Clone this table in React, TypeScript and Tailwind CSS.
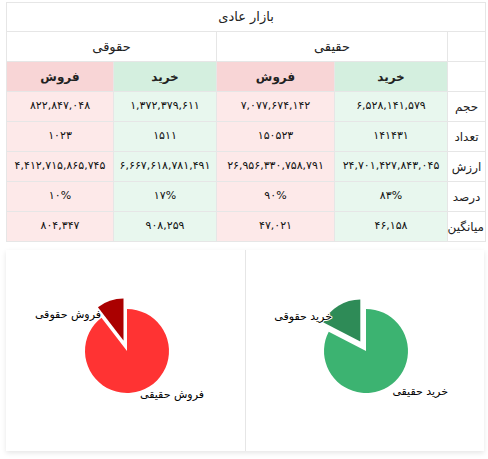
type Row = {
    label: string;
    values: [string, string, string, string];
};

const rows: Row[] = [
    { label: 'حجم', values: ['۶,۵۲۸,۱۴۱,۵۷۹', '۷,۰۷۷,۶۷۴,۱۴۲', '۱,۳۷۲,۳۷۹,۶۱۱', '۸۲۲,۸۴۷,۰۴۸'] },
    { label: 'تعداد', values: ['۱۴۱۴۳۱', '۱۵۰۵۲۳', '۱۵۱۱', '۱۰۲۳'] },
    { label: 'ارزش', values: ['۲۴,۷۰۱,۴۲۷,۸۴۳,۰۴۵', '۲۶,۹۵۶,۳۳۰,۷۵۸,۷۹۱', '۶,۶۶۷,۶۱۸,۷۸۱,۴۹۱', '۴,۴۱۲,۷۱۵,۸۶۵,۷۴۵'] },
    { label: 'درصد', values: ['۸۳%', '۹۰%', '۱۷%', '۱۰%'] },
    { label: 'میانگین', values: ['۴۶,۱۵۸', '۴۷,۰۲۱', '۹۰۸,۲۵۹', '۸۰۴,۳۴۷'] },
];

const cellBg = ['bg-[#e8f7ee]', 'bg-[#fde9e9]', 'bg-[#e8f7ee]', 'bg-[#fde9e9]'];

type PieProps = {
    part: number;
    main: string;
    dark: string;
    mainLabel: string;
    partLabel: string;
    partLabelPos: [number, number];
    mainLabelPos: [number, number];
};

function Pie({ part, main, dark, mainLabel, partLabel, partLabelPos, mainLabelPos }: PieProps) {
    const cx = 120;
    const cy = 101;
    const r = 42;
    const d = 11;
    const theta = part * 2 * Math.PI;
    const pt = (a: number, ox = 0, oy = 0) => [cx + ox + r * Math.sin(a), cy + oy - r * Math.cos(a)];

    // slice grande
    const [ex, ey] = pt(2 * Math.PI - theta);
    const mainPath = `M${cx},${cy} L${cx},${cy - r} A${r},${r} 0 1 1 ${ex},${ey} Z`;

    // slice separada
    const mid = 2 * Math.PI - theta / 2;
    const ox = d * Math.sin(mid);
    const oy = -d * Math.cos(mid);
    const [sx, sy] = pt(2 * Math.PI - theta, ox, oy);
    const [tx, ty] = pt(0, ox, oy);
    const partPath = `M${cx + ox},${cy + oy} L${sx},${sy} A${r},${r} 0 0 1 ${tx},${ty} Z`;

    const labelProps = {
        direction: 'rtl' as const,
        textAnchor: 'start' as const,
        fontSize: 11,
        fill: '#000',
        stroke: '#fff',
        strokeWidth: 2,
        paintOrder: 'stroke',
        strokeLinejoin: 'round' as const,
    };

    return (
        <svg width="238" height="201" className="block">
            <path d={mainPath} fill={main} />
            <path d={partPath} fill={dark} />
            <text x={partLabelPos[0]} y={partLabelPos[1]} {...labelProps}>
                {partLabel}
            </text>
            <text x={mainLabelPos[0]} y={mainLabelPos[1]} {...labelProps}>
                {mainLabel}
            </text>
        </svg>
    );
}

export default function App() {
    return (
        <div className="min-h-[459px] bg-white font-['DejaVu_Sans',sans-serif] text-[#222]">
            <div className="pt-[2px] pl-[6px]">
                <table dir="rtl" className="w-[479px] table-fixed border-collapse border border-[#e6e6e6] text-center text-[12px]">
                    <colgroup>
                        <col className="w-[38px]" />
                        <col className="w-[113px]" />
                        <col className="w-[118px]" />
                        <col className="w-[103px]" />
                        <col className="w-[107px]" />
                    </colgroup>
                    <thead>
                        <tr className="h-[29px]">
                            <th colSpan={5} className="border-b border-[#e6e6e6] text-[13px] font-normal">
                                بازار عادی
                            </th>
                        </tr>
                        <tr className="h-[30px]">
                            <th className="border border-[#e6e6e6]"></th>
                            <th colSpan={2} className="border border-[#e6e6e6] text-[13px] font-normal">حقیقی</th>
                            <th colSpan={2} className="border border-[#e6e6e6] text-[13px] font-normal">حقوقی</th>
                        </tr>
                        <tr className="h-[30px]">
                            <th className="border border-[#e6e6e6]"></th>
                            <th className="border border-[#e6e6e6] bg-[#d4efdf] font-bold">خرید</th>
                            <th className="border border-[#e6e6e6] bg-[#f8d5d6] font-bold">فروش</th>
                            <th className="border border-[#e6e6e6] bg-[#d4efdf] font-bold">خرید</th>
                            <th className="border border-[#e6e6e6] bg-[#f8d5d6] font-bold">فروش</th>
                        </tr>
                    </thead>
                    <tbody>
                        {rows.map((row) => (
                            <tr key={row.label} className="h-[30px]">
                                <td className="whitespace-nowrap border border-[#e6e6e6] px-[1px]">{row.label}</td>
                                {row.values.map((v, i) => (
                                    <td key={i} className={`whitespace-nowrap border border-[#e6e6e6] px-[3px] text-[11px] text-[#111] ${cellBg[i]}`}>
                                        {v}
                                    </td>
                                ))}
                            </tr>
                        ))}
                    </tbody>
                </table>
            </div>

            <div dir="rtl" className="ml-[6px] mt-[8px] flex h-[201px] w-[478px] bg-white shadow-[0_2px_5px_rgba(0,0,0,0.1)]">
                <div className="w-[239px] border-l border-[#e6e6e6]">
                    <Pie
                        part={0.1737}
                        main="#3cb371"
                        dark="#2e8b57"
                        partLabel="خرید حقوقی"
                        mainLabel="خرید حقیقی"
                        partLabelPos={[86, 70]}
                        mainLabelPos={[202, 145]}
                    />
                </div>
                <div className="w-[239px]">
                    <Pie
                        part={0.104}
                        main="#ff3333"
                        dark="#aa0000"
                        partLabel="فروش حقوقی"
                        mainLabel="فروش حقیقی"
                        partLabelPos={[94, 68]}
                        mainLabelPos={[197, 148]}
                    />
                </div>
            </div>
        </div>
    );
}
